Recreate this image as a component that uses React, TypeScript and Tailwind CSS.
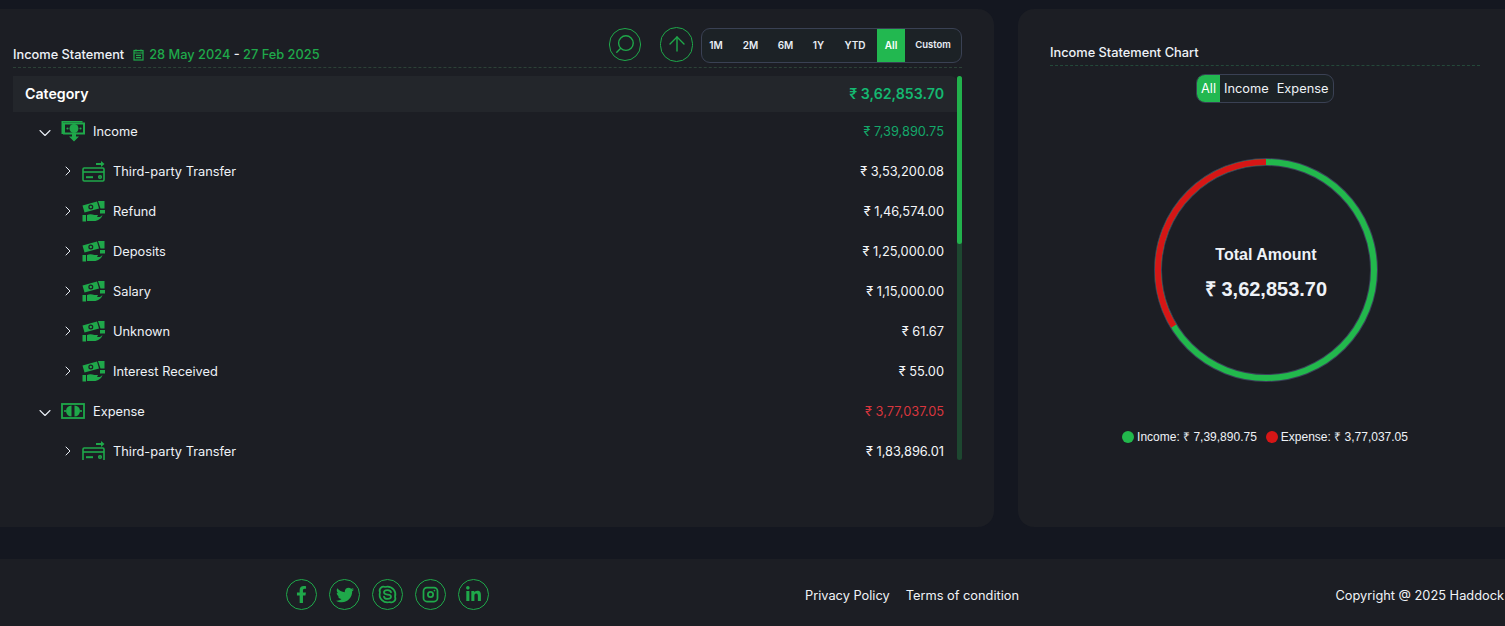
import React from "react";
import { ArrowUp, ChevronDown, ChevronRight, Search } from "lucide-react";
import { FaFacebookF, FaLinkedinIn, FaTwitter } from "react-icons/fa";
import { TbBrandInstagram, TbBrandSkype } from "react-icons/tb";

const G = "#1fa84a";

function CardIcon() {
  return (
    <svg width="24" height="22" viewBox="0 0 24 22" fill="none" stroke={G} strokeWidth="1.6">
      <rect x="1" y="8" width="21" height="13" rx="1.2" />
      <path d="M1 12h21" strokeWidth="1.6" />
      <path d="M4 17.2h7" strokeWidth="2" />
      <circle cx="18" cy="17" r="1.3" />
      <path d="M14 4h7" strokeWidth="2" />
      <path d="M19 1v6l3.500-3z" fill={G} stroke="none" />
    </svg>
  );
}

function HandIcon() {
  return (
    <svg width="24" height="22" viewBox="0 0 24 22" fill="none">
      <path d="M0.500 5.500 15 1.500l2 7-14.500 4z" fill={G} />
      <circle cx="8.800" cy="7" r="2.500" fill="#1c1e24" />
      <circle cx="8.800" cy="7" r="1.200" fill={G} />
      <path d="M16 1h6.500v7.500h-4z" fill={G} />
      <rect x="18" y="10" width="5" height="3.500" fill={G} />
      <path d="M0.500 15h3.500v6.500H0.500z" fill={G} />
      <path d="M5 15c3-1.400 5-.6 7.500 0h3.500l-1 2h3l2.500-2c-1 3.500-4.500 6-8.500 6H5z" fill={G} />
    </svg>
  );
}

function IncomeIcon() {
  return (
    <svg width="24" height="22" viewBox="0 0 24 22" fill="none">
      <path d="M0.500 1h21v1.500H2v11.500H0.500z" fill={G} />
      <path d="M2 2.500H24v12H2z" fill={G} />
      <path d="M4 4.500h18v8H4z" fill="#1c1e24" />
      <circle cx="13" cy="8.500" r="4.500" fill={G} />
      <circle cx="6.500" cy="8.500" r="1.100" fill={G} />
      <circle cx="19.500" cy="8.500" r="1.100" fill={G} />
      <path d="M11 14h4v2.500h3L13 21.500l-5-5h3z" fill={G} />
    </svg>
  );
}

function ExpenseIcon() {
  return (
    <svg width="24" height="16" viewBox="0 0 24 16" fill="none">
      <rect x="1" y="1" width="22" height="14" stroke={G} strokeWidth="1.800" />
      <path d="M10.500 2.500a5.500 5.500 0 0 0 0 11zM13.500 2.500a5.500 5.500 0 0 1 0 11z" fill={G} />
      <circle cx="4" cy="8" r="1.100" fill={G} />
      <circle cx="20" cy="8" r="1.100" fill={G} />
    </svg>
  );
}

function Row({ level, label, amount, color, icon }: { level: 1 | 2; label: string; amount: string; color?: string; icon: React.ReactNode }) {
  return (
    <div className="flex h-10 shrink-0 items-center pr-[13px]">
      {level === 1 ? (
        <div className="flex w-[80px] shrink-0 items-center pl-[22px]">
          <ChevronDown size={20} strokeWidth={1.3} className="mr-[6px] mt-[3px] shrink-0 text-[#e8edf4]" />
          {icon}
        </div>
      ) : (
        <div className="flex w-[100px] shrink-0 items-center pl-[47px]">
          <ChevronRight size={16} strokeWidth={1.500} className="mr-[5px] shrink-0 text-[#e8edf4]" />
          <span className="ml-[1px]">{icon}</span>
        </div>
      )}
      <span className="flex-1 translate-y-px text-[12.800px] leading-none text-[#eef2f7]">{label}</span>
      <span className={`translate-y-px text-[12.800px] leading-none ${color ?? "text-[#f4f6f9]"}`}>{amount}</span>
    </div>
  );
}

const ranges = ["1M", "2M", "6M", "1Y", "YTD"];

function Circle({ children, size }: { children: React.ReactNode; size: string }) {
  return (
    <span className={`flex shrink-0 items-center justify-center rounded-full border border-[#1fa84a] text-[#1fa84a] ${size}`}>
      {children}
    </span>
  );
}

export default function App() {
  const r = 108;
  const c = 2 * Math.PI * r;
  const red = c * 0.3376;
  return (
    <div className="flex h-[626px] w-[1505px] flex-col overflow-hidden bg-[#141720] font-['Inter',sans-serif]">
      <div className="mt-[9px] flex h-[518px] shrink-0 gap-[24px]">
        <section className="flex w-[994px] shrink-0 flex-col rounded-r-2xl bg-[#1c1e24] pl-[13px] pr-[32px]">
          <header className="flex h-[59px] shrink-0 items-end border-b border-dashed border-[#2c4237] pb-[4px]">
            <h2 className="text-[12.800px] font-medium leading-4 text-[#eef2f7]">Income Statement</h2>
            <svg width="11" height="12" viewBox="0 0 11 12" fill="none" stroke={G} strokeWidth="1.200" className="mb-[2px] ml-[9px]">
              <rect x="1" y="1.500" width="9" height="9.500" />
              <path d="M1 4h9M3 6.300h5M3 8.600h5M3 .5v2M8 .5v2" />
            </svg>
            <span className="ml-[5px] text-[12.800px] font-medium leading-4 text-[#1fa84a]">
              28 May 2024 <span className="text-[#eef2f7]">-</span> 27 Feb 2025
            </span>
            <div className="ml-auto flex items-center">
              <span className="-mt-[3px]">
                <Circle size="h-[33px] w-[32px]">
                  <Search size={22} strokeWidth={1.500} className="-scale-x-100" />
                </Circle>
              </span>
              <span className="ml-[19px] -mt-[3px]">
                <Circle size="h-[35px] w-[33px]">
                  <ArrowUp size={24} strokeWidth={1.400} />
                </Circle>
              </span>
              <div className="ml-[8px] flex h-[35px] w-[261px] items-stretch overflow-hidden rounded-[9px] border border-[#3a4154] bg-[#1c2226] text-[10px] font-semibold text-[#e8edf4]">
                <div className="flex flex-1 items-center">
                  {ranges.map((x, i) => (
                    <span key={x} className={`${["w-[28px]", "w-[41px]", "w-[29px]", "w-[37px]", "w-[36px]"][i]} text-center`}>
                      {x}
                    </span>
                  ))}
                </div>
                <span className="flex w-[28px] items-center justify-center bg-[#22b850] text-white">All</span>
                <span className="flex w-[56px] items-center justify-center text-[9.500px]">Custom</span>
              </div>
            </div>
          </header>
          <div className="mt-[8px] flex h-[384px] overflow-hidden">
            <div className="flex flex-1 flex-col overflow-hidden">
              <div className="flex h-9 shrink-0 items-center justify-between rounded-tr-md bg-[#23262b] pl-3 pr-[13px] font-semibold">
                <span className="text-[14.200px] leading-5 text-white">Category</span>
                <span className="text-[14.200px] leading-5 text-[#14b871]">₹ 3,62,853.70</span>
              </div>
              <div className="-mt-[1px]">
                <Row level={1} label="Income" amount="₹ 7,39,890.75" color="text-[#14a86a]" icon={<IncomeIcon />} />
                <Row level={2} label="Third-party Transfer" amount="₹ 3,53,200.08" icon={<CardIcon />} />
                <Row level={2} label="Refund" amount="₹ 1,46,574.00" icon={<HandIcon />} />
                <Row level={2} label="Deposits" amount="₹ 1,25,000.00" icon={<HandIcon />} />
                <Row level={2} label="Salary" amount="₹ 1,15,000.00" icon={<HandIcon />} />
                <Row level={2} label="Unknown" amount="₹ 61.67" icon={<HandIcon />} />
                <Row level={2} label="Interest Received" amount="₹ 55.00" icon={<HandIcon />} />
                <Row level={1} label="Expense" amount="₹ 3,77,037.05" color="text-[#d9363e]" icon={<ExpenseIcon />} />
                <Row level={2} label="Third-party Transfer" amount="₹ 1,83,896.01" icon={<CardIcon />} />
              </div>
            </div>
            <div className="h-full w-[5px] shrink-0 rounded-full bg-[#1d4730]">
              <div className="h-[168px] rounded-full bg-[#22b14c]" />
            </div>
          </div>
        </section>

        <section className="flex flex-1 flex-col rounded-l-2xl bg-[#1c1e24] pl-[32px] pr-[25px]">
          <h2 className="mt-[36px] h-[21px] shrink-0 border-b border-dashed border-[#24493a] text-[12.800px] font-medium leading-[15px] text-[#eef2f7]">
            Income Statement Chart
          </h2>
          <div className="mt-[8px] flex justify-center">
            <div className="flex h-[29px] w-[138px] items-stretch overflow-hidden rounded-[9px] border border-[#3a4154] bg-[#1c2226] text-[12.800px] text-[#eef2f7]">
              <span className="flex w-[23px] items-center justify-center bg-[#22b850] text-white">All</span>
              <span className="ml-[4px] flex items-center">Income</span>
              <span className="ml-[8px] flex items-center">Expense</span>
            </div>
          </div>
          <div className="relative mt-[55px] ml-[2px] h-[224px] w-[224px] self-center">
            <svg width="224" height="224" viewBox="0 0 224 224" className="-rotate-90">
              <circle cx="112" cy="112" r={r} fill="none" stroke="#3a4058" strokeWidth="8" />
              <circle cx="112" cy="112" r={r} fill="none" stroke="#22b84c" strokeWidth="6" />
              <circle
                cx="112"
                cy="112"
                r={r}
                fill="none"
                stroke="#d61616"
                strokeWidth="6"
                strokeDasharray={`${red} ${c - red}`}
                strokeDashoffset={red}
              />
            </svg>
            <div className="absolute inset-0 flex flex-col items-center justify-center font-['Liberation_Sans',sans-serif] font-bold text-[#eef2f7]">
              <span className="mt-[6px] text-[16px] leading-5">Total Amount</span>
              <span className="mt-[12px] text-[20px] leading-6">₹ 3,62,853.70</span>
            </div>
          </div>
          <div className="ml-[2px] mt-[48px] flex justify-center pr-[2px] font-['Liberation_Sans',sans-serif] text-[12px] leading-[14px] text-[#eef2f7]">
            <span className="mr-[3px] mt-[1px] h-3 w-3 rounded-full bg-[#22b84c]" />
            <span>Income: ₹ 7,39,890.75</span>
            <span className="ml-[9px] mr-[3px] mt-[1px] h-3 w-3 rounded-full bg-[#d61616]" />
            <span>Expense: ₹ 3,77,037.05</span>
          </div>
        </section>
      </div>

      <footer className="mt-[32px] flex h-[67px] shrink-0 items-center bg-[#1c1e24] pt-[5px] text-[12.800px] text-[#f0f3f7]">
        <div className="ml-[286px] -mt-[1px] flex gap-3">
          <Circle size="h-[31px] w-[31px]"><FaFacebookF size={17} /></Circle>
          <Circle size="h-[31px] w-[31px]"><FaTwitter size={18} /></Circle>
          <Circle size="h-[31px] w-[31px]"><TbBrandSkype size={21} /></Circle>
          <Circle size="h-[31px] w-[31px]"><TbBrandInstagram size={21} /></Circle>
          <Circle size="h-[31px] w-[31px]"><FaLinkedinIn size={17} /></Circle>
        </div>
        <a className="ml-[316px] translate-y-px">Privacy Policy</a>
        <a className="ml-[16px] translate-y-px">Terms of condition</a>
        <span className="ml-auto translate-y-px whitespace-nowrap pr-[1px]">Copyright @ 2025 Haddock</span>
      </footer>
    </div>
  );
}
